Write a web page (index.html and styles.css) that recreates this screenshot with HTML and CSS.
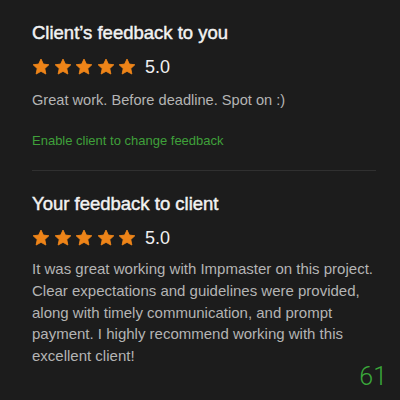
FILE: index.html
```html
<!DOCTYPE html>
<html lang="en">
<head>
    <meta charset="UTF-8">
    <meta name="viewport" content="width=device-width, initial-scale=1.0">
    <title>Feedback</title>
    <link rel="stylesheet" href="styles.css">
</head>
<body>
    <svg width="0" height="0" class="defs">
        <defs>
            <path id="star" d="M10 1.2l2.6 5.6 6.1.7-4.5 4.2 1.2 6.1L10 14.8l-5.4 3 1.2-6.1L1.3 7.5l6.1-.7z"/>
        </defs>
    </svg>

    <div class="panel">
        <section class="feedback">
            <h2>Client’s feedback to you</h2>
            <div class="rating">
                <span class="stars">
                    <svg viewBox="0 0 20 20"><use href="#star"/></svg>
                    <svg viewBox="0 0 20 20"><use href="#star"/></svg>
                    <svg viewBox="0 0 20 20"><use href="#star"/></svg>
                    <svg viewBox="0 0 20 20"><use href="#star"/></svg>
                    <svg viewBox="0 0 20 20"><use href="#star"/></svg>
                </span>
                <span class="score">5.0</span>
            </div>
            <p class="comment">Great work. Before deadline. Spot on :)</p>
            <a class="link" href="#">Enable client to change feedback</a>
        </section>

        <hr class="divider">

        <section class="feedback">
            <h2>Your feedback to client</h2>
            <div class="rating">
                <span class="stars">
                    <svg viewBox="0 0 20 20"><use href="#star"/></svg>
                    <svg viewBox="0 0 20 20"><use href="#star"/></svg>
                    <svg viewBox="0 0 20 20"><use href="#star"/></svg>
                    <svg viewBox="0 0 20 20"><use href="#star"/></svg>
                    <svg viewBox="0 0 20 20"><use href="#star"/></svg>
                </span>
                <span class="score">5.0</span>
            </div>
            <p class="comment long">It was great working with Impmaster on this project. Clear expectations and guidelines were provided, along with timely communication, and prompt payment. I highly recommend working with this excellent client!</p>
        </section>
    </div>

    <span class="counter">61</span>
</body>
</html>
```

FILE: styles.css
```css
body {
    margin: 0;
    background: #1c1c1c;
    font-family: 'Liberation Sans', Arial, sans-serif;
    color: #e8e8e8;
    height: 400px;
    overflow: hidden;
    position: relative;
}

.defs {
    position: absolute;
}

.panel {
    padding: 22px 24px 0 32px;
}

.feedback h2 {
    margin: 0;
    font-size: 18.5px;
    font-weight: normal;
    -webkit-text-stroke: 0.45px #f2f2f2;
    color: #f2f2f2;
    line-height: 22px;
}

.rating {
    display: flex;
    align-items: center;
    margin-top: 12px;
    height: 22px;
}

.stars {
    display: flex;
    gap: 3.5px;
}

.stars svg {
    width: 18px;
    height: 18px;
    fill: #ee8418;
    stroke: #ee8418;
    stroke-width: 1;
    stroke-linejoin: round;
}

.score {
    margin-left: 9px;
    font-size: 18px;
    color: #f0f0f0;
}

.comment {
    margin: 11px 0 0;
    font-size: 14.6px;
    line-height: 22px;
    color: #b4b4b4;
}

.comment.long {
    margin-top: 9px;
    font-size: 15px;
    line-height: 21.8px;
}

.link {
    display: block;
    margin-top: 22px;
    font-size: 13px;
    color: #3fa03a;
    text-decoration: none;
}

.divider {
    border: 0;
    border-top: 1px solid #303030;
    margin: 22px 0 22px;
}

.counter {
    position: absolute;
    right: 13px;
    bottom: 9px;
    font-family: Roboto, sans-serif;
    font-size: 25px;
    font-weight: 300;
    color: #3aa83a;
}
```
